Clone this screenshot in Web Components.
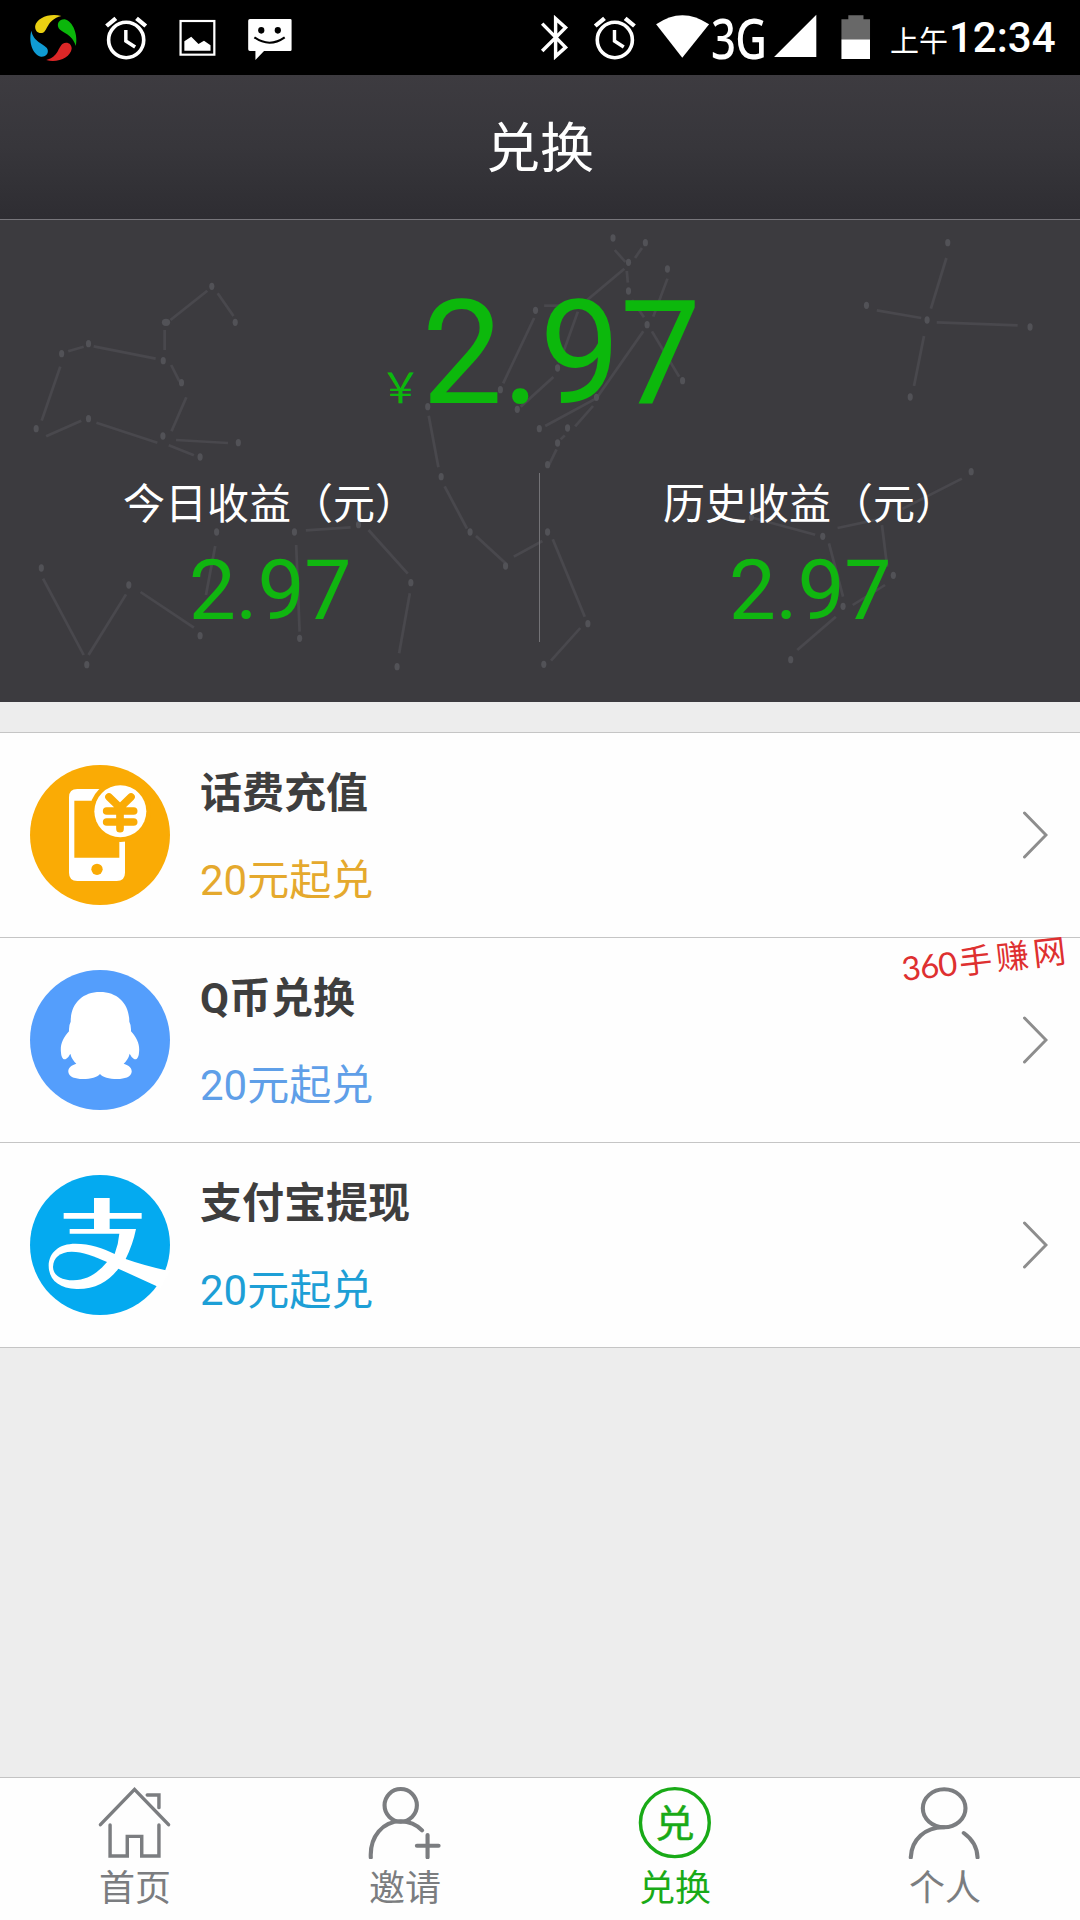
<!DOCTYPE html>
<html lang="zh-CN">
<head>
<meta charset="utf-8">
<title>兑换</title>
<style>
html,body{margin:0;padding:0}
body{width:1080px;height:1920px;overflow:hidden;background:#ededed;font-family:Roboto,"Noto Sans CJK SC",sans-serif}
</style>
</head>
<body>
<exchange-app></exchange-app>
<script>
const define = (name, css, html) => customElements.define(name, class extends HTMLElement {
  constructor() {
    super();
    this.attachShadow({mode: 'open'}).innerHTML =
      `<style>*{box-sizing:border-box}${css}</style>${typeof html === 'function' ? html(this) : html}`;
  }
});

const alarm = (cx) => `<g fill="none" stroke="#fff"><ellipse cx="${cx}" cy="120" rx="51" ry="53" stroke-width="10.5"/>
  <path d="M${cx-1} 90V123L${cx+26} 141" stroke-width="10"/>
  <path d="M${cx-57} 78L${cx-30} 55M${cx+57} 78L${cx+30} 55" stroke-width="12.5"/></g>`;

define('status-bar', `
:host{display:flex;height:75px;background:#000;color:#fff;justify-content:space-between}
.side{display:flex;height:75px}
.left{padding-left:20.3px}
svg{display:block;height:75px;flex:none}
.net{width:62px;font:500 56px/75px "Noto Sans",sans-serif;white-space:nowrap}
.net span{display:inline-block;transform:scaleX(.78);transform-origin:0 50%;letter-spacing:-1px}
.clock{display:flex;align-items:baseline;width:190px;line-height:75px;white-space:nowrap}
.ampm{font-size:29px;width:59px}
.time{font-size:42px;font-weight:500}
`, `
<div class="side left">
<svg width="68.9" viewBox="60 0 200 225" preserveAspectRatio="none">
<path fill="#e9cf12" d="M180 48C145 38 108 55 104 78C103 92 112 101 124 99C141 96 135 60 180 48Z"/>
<path fill="#0bb60b" d="M222 138C229 105 214 64 190 58C174 57 166 71 172 84C182 100 212 101 222 138Z"/>
<path fill="#dc2727" d="M136 180C169 190 207 172 210 146C210 130 196 124 184 131C169 143 174 168 136 180Z"/>
<path fill="#109bd3" d="M93 92C84 124 96 164 121 170C137 171 146 157 138 144C127 129 100 127 93 92Z"/></svg>
<svg width="74" viewBox="260 0 215 225" preserveAspectRatio="none">${alarm(368)}</svg>
<svg width="68.9" viewBox="475 0 200 225" preserveAspectRatio="none"><rect x="526" y="63" width="98" height="101" fill="none" stroke="#fff" stroke-width="6.5"/><path fill="#fff" d="M537 152V124L557 110L578 132L594 122L613 136V152Z"/></svg>
<svg width="77.5" viewBox="675 0 225 225" preserveAspectRatio="none"><path fill="#fff" d="M727 57H844Q848 57 848 61V149Q848 153 844 153H768L743 180V153H727Q722 153 722 148V62Q722 57 727 57Z"/><ellipse cx="760" cy="91" rx="9" ry="10"/><ellipse cx="808" cy="91" rx="9" ry="10"/><path d="M740 112Q784 144 828 112" fill="none" stroke="#000" stroke-width="6"/></svg>
</div>
<div class="side">
<svg width="41.3" viewBox="-10 0 120 225" preserveAspectRatio="none"><path d="M8 71L76 142L47 169V56L76 83L8 153" fill="none" stroke="#fff" stroke-width="10"/></svg>
<svg width="74" viewBox="110 0 215 225" preserveAspectRatio="none">${alarm(217)}</svg>
<svg width="59.5" viewBox="325 0 173 225" preserveAspectRatio="none"><path fill="#fff" d="M337 73Q413 18 491 73L413 173Z"/></svg>
<div class="net"><span>3G</span></div>
<svg width="55" viewBox="675 0 160 225" preserveAspectRatio="none"><path fill="#fff" d="M678 171H801V44Z"/></svg>
<svg width="62" viewBox="835 0 180 225" preserveAspectRatio="none"><path fill="#686868" d="M874 118V58H894V46H938V58H957V118Z"/><path fill="#fff" d="M874 118H957V177H874Z"/></svg>
<div class="clock"><span class="ampm">上午</span><span class="time">12:34</span></div>
</div>`);

define('title-bar', `
:host{display:block;height:145px;padding-top:3px;border-bottom:1px solid #77767b;background:linear-gradient(#3d3b40,#37363b 50%,#2e2d32);color:#fff;font-size:54px;line-height:144px;text-align:center;box-sizing:border-box}
`, `<slot></slot>`);

const stars = [[615,199],[683,307],[257,371],[179,401],[474,422],[527,488],[105,626],[257,596],[473,648],[692,668],[581,711],[120,1044],[252,1334],[374,1095],[581,1247],[629,936],[855,936],[1041,914],[870,1255],[1193,1088],[1153,1340],[1242,560],[1281,770],[1365,936],[1468,1038],[1453,509],[1555,271],[1502,568],[1566,626],
[1780,54],[1874,68],[1825,127],[1938,147],[1825,213],[1879,314],[1982,482],[1619,444],[1732,532],[1648,624],[1619,669],[1590,734],[1590,936],[1707,1211],[1579,1333],[2516,256],[2752,68],[2692,300],[2991,321],[2643,531],[2820,755],[2389,949],[2182,892],[2594,1066],[2448,1159],[2296,1319]];
const links = [[602,212,495,300],[632,220,678,288],[478,330,478,390],[272,379,452,416],[198,394,243,380],[175,440,121,602],[497,435,521,484],[541,532,498,634],[134,649,236,602],[280,608,457,668],[511,660,662,669],[490,676,563,706],[125,1076,243,1305],[257,1305,366,1123],[408,1116,563,1223],[625,978,598,1125],[860,975,870,1235],[888,931,1018,922],[1070,930,1184,1061],[1190,1120,1159,1300],[1245,587,1273,742],[1291,799,1356,926],[1382,948,1468,1030],[1492,1010,1575,963],[1551,294,1461,490],[1512,560,1607,471],
[1785,90,1816,126],[1864,84,1844,114],[1813,146,1705,240],[1820,153,1823,188],[1938,176,1897,290],[1835,240,1870,292],[1580,257,1660,257],[1678,275,1624,430],[1893,334,1972,470],[1868,334,1735,530],[1730,536,1583,618],[1722,558,1670,619],[1640,646,1628,658],[1616,688,1594,735],[1605,958,1698,1190],[1685,1224,1600,1322],[2546,271,2675,294],[2748,114,2703,266],[2720,307,2955,316],[2683,348,2654,498],[2793,776,2620,867],[2560,896,2432,924],[2367,944,2180,892],[2561,915,2576,1040],[2407,970,2448,1130],[2570,1095,2476,1155],[2427,1190,2315,1290]];

define('constellation-map', `
:host{display:block;position:absolute;inset:0}
svg{display:block;width:1080px;height:482px}
`, `<svg viewBox="0 0 3136 1446" preserveAspectRatio="none"><g stroke="#49484d" stroke-width="8">${links.map(l=>`<path d="M${l[0]} ${l[1]}L${l[2]} ${l[3]}"/>`).join('')}</g><g fill="#525257">${stars.map(s=>`<ellipse cx="${s[0]}" cy="${s[1]}" rx="7.5" ry="11"/>`).join('')}<ellipse cx="482" cy="307" rx="12" ry="11"/></g></svg>`);

define('earning-stat', `
:host{display:block;width:540px;padding-top:2px;text-align:center;color:#fff;box-sizing:border-box}
.label{font-size:42px;line-height:60px}
.value{font-size:84px;line-height:108px;margin-top:2px;letter-spacing:-.3px;color:#10b610}
`, `<div class="label"><slot></slot></div><div class="value"><slot name="value"></slot></div>`);

define('balance-panel', `
:host{display:block;position:relative;height:482px;padding-top:62px;background:#3c3b3f;box-sizing:border-box}
.body{position:relative}
.total{display:flex;justify-content:center;align-items:baseline;height:144px;color:#0cb80c;font-size:144px;line-height:144px}
.cur{font-size:42px;line-height:42px}
.sum{letter-spacing:-.5px}
.stats{display:flex;height:169px;margin-top:47px}
.rule{width:1px;margin-left:-1px;background:#737276;flex:none}
`, `<constellation-map></constellation-map><div class="body">
<div class="total"><span class="cur">￥</span><span class="sum">2.97</span></div>
<div class="stats"><earning-stat>今日收益（元）<span slot="value">2.97</span></earning-stat><div class="rule"></div><earning-stat>历史收益（元）<span slot="value">2.97</span></earning-stat></div></div>`);

const badges = {
phone: `<svg viewBox="90 195 420 420"><circle cx="300" cy="405" r="210" fill="#faab05"/>
<path fill="#fff" fill-rule="evenodd" d="M232 267H350Q375 267 375 292V518Q375 543 350 543H232Q207 543 207 518V292Q207 267 232 267ZM223 302V473H358V302Z"/>
<circle cx="361" cy="334" r="92" fill="#faab05"/><circle cx="361" cy="334" r="78" fill="#fff"/>
<circle cx="291" cy="508" r="17" fill="#faab05"/>
<path d="M327 291L360 323L393 291M320 333H401M320 366H401M360 326V386" fill="none" stroke="#faab05" stroke-width="23" stroke-linecap="round"/></svg>`,
qq: `<svg viewBox="90 120 420 420"><circle cx="300" cy="330" r="210" fill="#549efc"/>
<path fill="#fff" d="M300 186C246 186 212 222 212 275Q206 286 207 304C188 325 180 345 183 368C184 382 190 391 198 387Q206 382 211 371Q215 388 229 401C211 407 204 415 205 426C207 441 226 447 248 447C274 447 291 442 300 432C309 442 326 447 352 447C374 447 393 441 395 426C396 415 389 407 371 401Q385 388 389 371Q394 382 402 387C410 391 416 382 417 368C420 345 412 325 393 304Q394 286 388 275C388 222 354 186 300 186Z"/></svg>`,
alipay: `<svg viewBox="90 735 420 420"><circle cx="300" cy="945" r="210" fill="#04aaf0"/>
<path fill="#fff" d="M282 804H329V849H425V866H329V897H408Q399 942 377 987Q430 1006 510 1024L482 1074L355 1016C326 1055 285 1078 230 1077C176 1076 146 1048 146 1007C147 966 178 941 226 941C271 941 309 954 344 972Q355 944 358 911H209V897H282V866H191V849H282Z"/>
<path fill="#04aaf0" d="M321 996C282 978 248 965 215 965C180 966 160 982 159 1010C159 1035 181 1051 220 1051C263 1050 294 1028 321 996Z"/></svg>`
};

define('exchange-row', `
:host{display:flex;align-items:center;height:205px;padding:0 32px 0 30px;background:#fefefe;border-bottom:1px solid #c5c5c5;box-sizing:border-box}
.badge svg{display:block;width:140px;height:140px}
.copy{display:flex;flex-direction:column;gap:27px;flex:1;margin-left:30px;padding-top:5px;font-size:42px;line-height:60px}
.name{color:#3e3e3e;font-weight:700}
.min{color:var(--accent)}
.more{display:block}
`, el => `<div class="badge">${badges[el.getAttribute('badge')]}</div>
<div class="copy"><div class="name"><slot></slot></div><div class="min"><slot name="min"></slot></div></div>
<svg class="more" width="26" height="50" viewBox="0 0 26 50"><path d="M2.5 3L24 25L2.5 47" fill="none" stroke="#8d8d8d" stroke-width="3" stroke-linecap="round"/></svg>`);

define('water-mark', `
:host{position:absolute;left:904px;top:945px;display:flex;align-items:baseline;transform:rotate(-6.5deg);transform-origin:0 100%;color:#de3030;white-space:nowrap;line-height:44px}
.n{font-family:Lato,sans-serif;font-size:33px;width:58px;letter-spacing:-.8px}
.c{font-size:33px;letter-spacing:4px;font-family:"Noto Sans CJK SC",sans-serif;font-weight:400}
`, `<span class="n">360</span><span class="c">手赚网</span>`);

const tabIcons = {
home: ['282', `<path d="M292 194L391 88L490 194M428 105H462V143M320 195V288H370V229H412V288H462V195" stroke-width="10"/>`],
invite: ['1067', `<ellipse cx="1165" cy="136" rx="47" ry="49"/><path d="M1078 292C1075 230 1113 184 1165 184Q1202 185 1227 211M1243 225V292M1212 257H1275"/>`],
swap: ['282', `<ellipse cx="392" cy="188" rx="100" ry="102" stroke-width="10"/><text x="392" y="231" text-anchor="middle" font-size="114" font-weight="400" fill="currentColor" stroke="currentColor" stroke-width="1.5" font-family="Noto Sans CJK SC,sans-serif">兑</text>`],
me: ['1067', `<ellipse cx="1175" cy="145" rx="62" ry="57"/><path d="M1078 292C1080 239 1120 201 1175 202M1232 219Q1270 247 1272 292"/>`]
};

define('tab-item', `
:host{display:flex;flex-direction:column;align-items:center;width:270px;padding-top:8px;color:#7b7d80;box-sizing:border-box}
:host([active]){color:#19aa17}
svg{display:block;width:76.4px;height:73px}
.label{font-size:36px;line-height:44px;margin-top:8px}
`, el => { const [x, art] = tabIcons[el.getAttribute('icon')];
return `<svg viewBox="${x} 78 222 219" preserveAspectRatio="none"><g fill="none" stroke="currentColor" stroke-width="12" stroke-linecap="round">${art}</g></svg><div class="label"><slot></slot></div>`; });

define('tab-bar', `
:host{display:flex;height:143px;background:#fefefe;border-top:1px solid #c3c3c3;box-sizing:border-box}
`, `<slot></slot>`);

define('exchange-app', `
:host{display:flex;flex-direction:column;position:relative;width:1080px;height:1920px;background:#ededed}
.list{margin-top:30px;border-top:1px solid #c5c5c5}
tab-bar{margin-top:auto}
`, `<status-bar></status-bar><title-bar>兑换</title-bar><balance-panel></balance-panel>
<div class="list">
<exchange-row badge="phone" style="--accent:#e5a92d">话费充值<span slot="min">20元起兑</span></exchange-row>
<exchange-row badge="qq" style="--accent:#5f9fe8">Q币兑换<span slot="min">20元起兑</span></exchange-row>
<exchange-row badge="alipay" style="--accent:#1d9fd6">支付宝提现<span slot="min">20元起兑</span></exchange-row>
</div>
<water-mark></water-mark>
<tab-bar><tab-item icon="home">首页</tab-item><tab-item icon="invite">邀请</tab-item><tab-item icon="swap" active>兑换</tab-item><tab-item icon="me">个人</tab-item></tab-bar>`);
</script>
</body>
</html>
